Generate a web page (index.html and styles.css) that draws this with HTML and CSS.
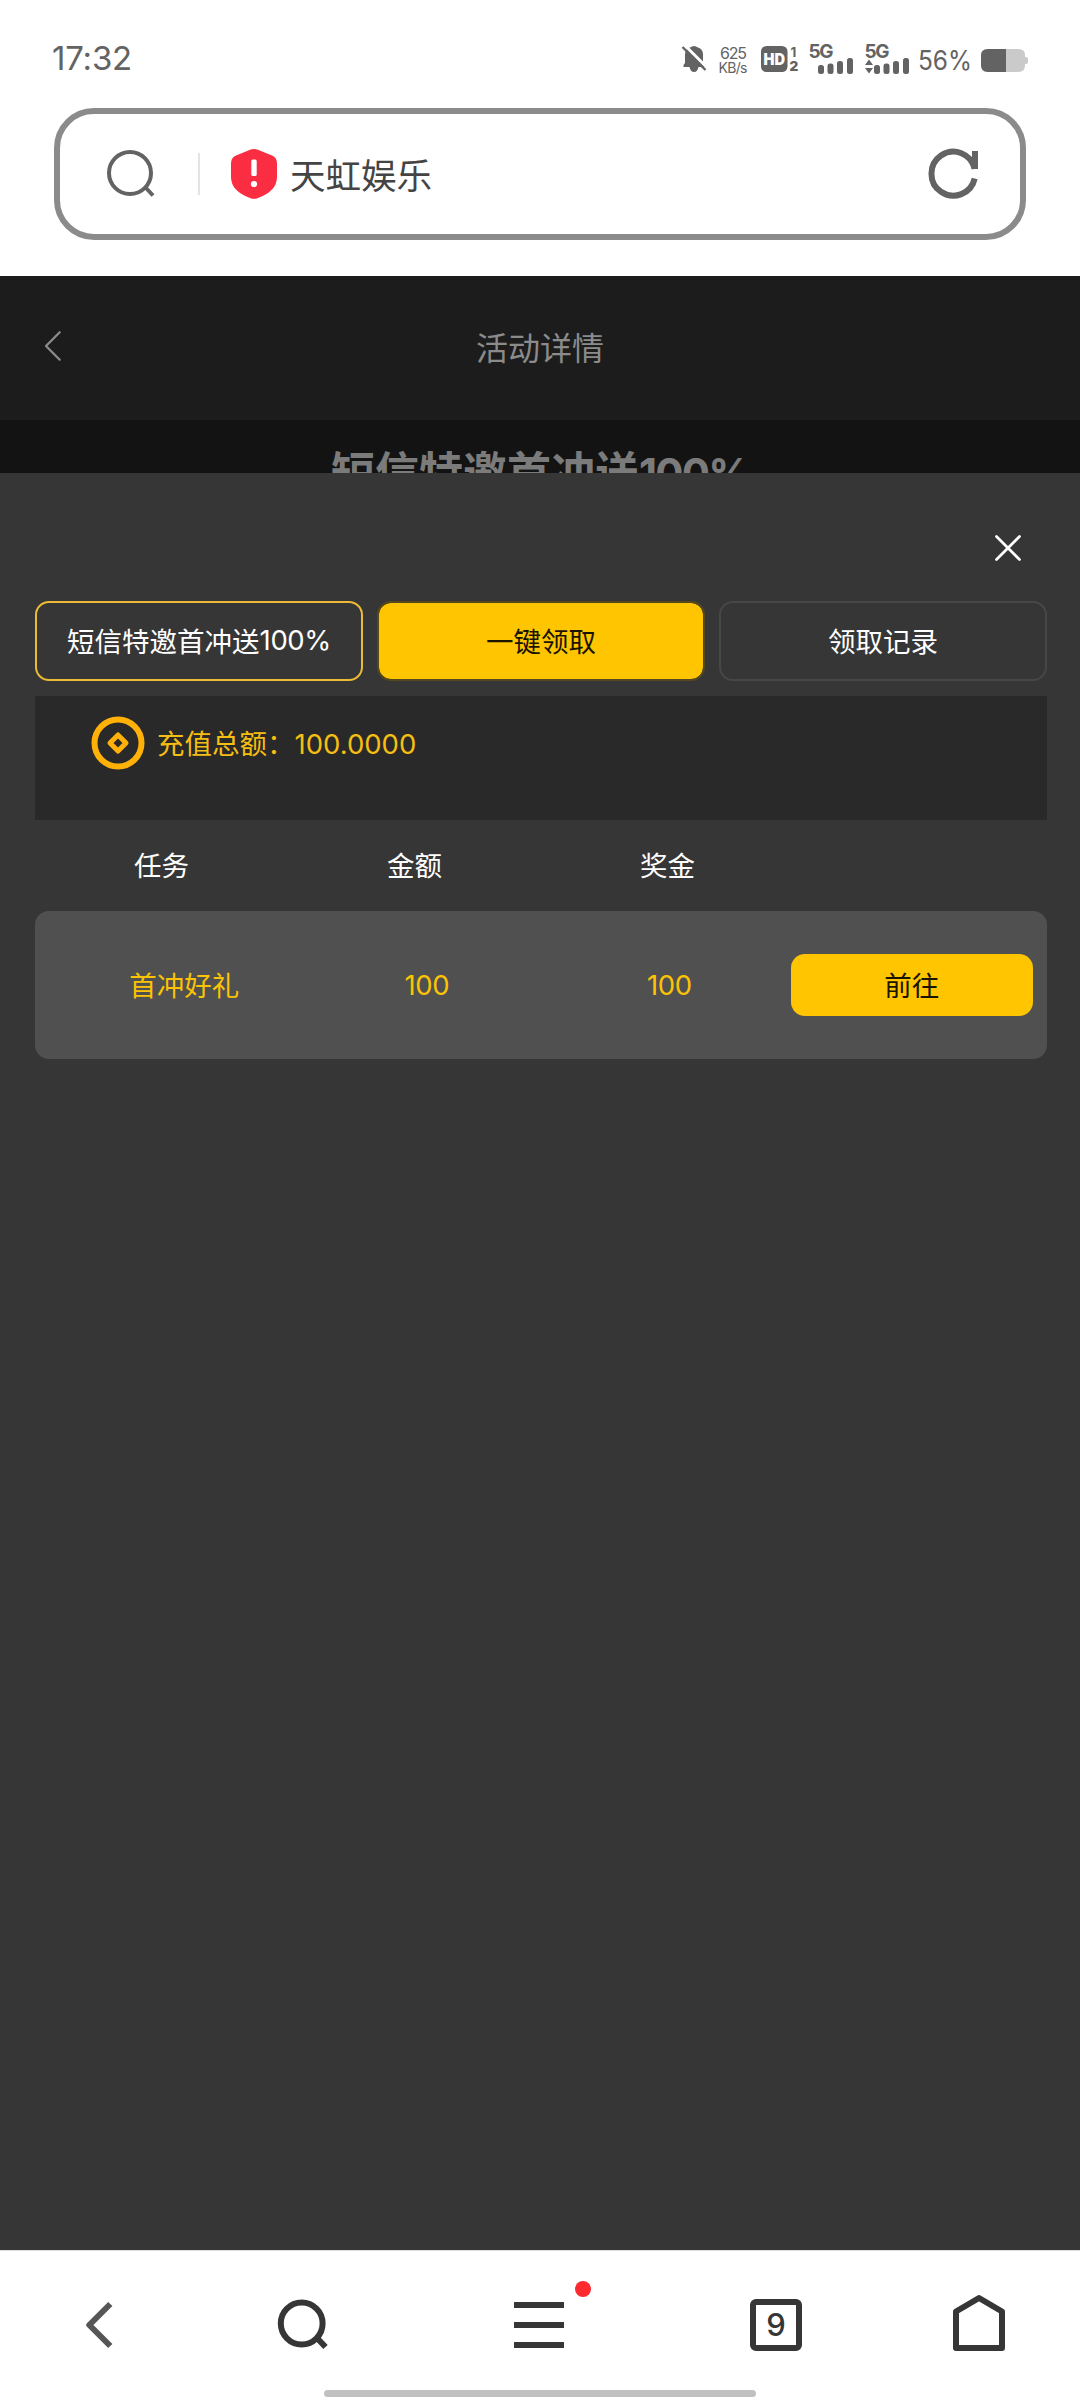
FILE: index.html
```html
<!DOCTYPE html>
<html lang="zh-CN">
<head>
<meta charset="utf-8">
<title>天虹娱乐</title>
<link rel="stylesheet" href="styles.css">
</head>
<body>
<div class="screen">
  <header class="browser">
    <div class="status">
      <span class="clock">17:32</span>
      <svg class="status-icons" width="350" height="36" viewBox="680 40 350 36">
        <g fill="#636363">
          <path d="M683.500 67V65L685 63V54.500Q685 49 690 47.500Q694 44.500 698 47.500Q703 49 703 54.500V63L705 65V67Z"/>
          <path d="M689.500 67h9q-1 5-4.500 5t-4.500-5Z"/>
          <path d="M684 44.500L707.500 68" stroke="#fff" stroke-width="3"/>
          <path d="M682.500 47L705.500 70" stroke="#636363" stroke-width="2.400"/>
          <rect x="761" y="46" width="26.500" height="26" rx="5.500"/>
          <rect x="818" y="65" width="6" height="9" rx="2.500"/>
          <rect x="827.500" y="63.500" width="6" height="10.500" rx="2.500"/>
          <rect x="837" y="61" width="6" height="13" rx="2.500"/>
          <rect x="847" y="58" width="6" height="16" rx="2.500"/>
          <rect x="874" y="65" width="6" height="9" rx="2.500"/>
          <rect x="883.500" y="63.500" width="6" height="10.500" rx="2.500"/>
          <rect x="893" y="61" width="6" height="13" rx="2.500"/>
          <rect x="903" y="58" width="6" height="16" rx="2.500"/>
          <path d="M865 65l4-5.500 4 5.500ZM865 68h8l-4 5.500Z"/>
          <path d="M1006 49h12.500q6.500 0 6.500 6.500v1.500h1q2 0 2 2v3q0 2-2 2h-1v1.500q0 6.500-6.500 6.500H1006Z" fill="#cacaca"/>
          <path d="M1006 49h-18.500q-6.500 0-6.500 6.500v10q0 6.500 6.500 6.500H1006Z"/>
        </g>
        <g class="status-text">
          <text x="720" y="59" font-size="16" textLength="27">625</text>
          <text x="718.500" y="73" font-size="14" textLength="29">KB/s</text>
          <text x="763.500" y="65" font-size="15.500" class="heavy inverse" textLength="21.500" lengthAdjust="spacingAndGlyphs">HD</text>
          <text x="790.500" y="56.500" font-size="13.500" class="semi">1</text>
          <text x="789.500" y="71" font-size="13.500" class="heavy">2</text>
          <text x="808.500" y="58" font-size="19" class="semi" textLength="25">5G</text>
          <text x="864.500" y="58" font-size="19" class="semi" textLength="25">5G</text>
          <text x="918" y="70" font-size="26.500" class="light" textLength="54" lengthAdjust="spacingAndGlyphs">56%</text>
        </g>
      </svg>
    </div>
    <div class="address">
      <svg class="address-search" width="50" height="50" viewBox="106 148 50 50" fill="none" stroke="#636363" stroke-width="4">
        <circle cx="130" cy="172" r="21"/>
        <path d="M146 187L153 194.500"/>
      </svg>
      <span class="address-rule"></span>
      <svg class="shield" width="46" height="50" viewBox="0 0 46 50">
        <path d="M18.500 1Q23-1 27.500 1L41 6.500Q46 8.500 46 14V28Q46 42 27 49Q23 50.700 19 49Q0 42 0 28V14Q0 8.500 5 6.500Z" fill="#fa2d42"/>
        <rect x="20.300" y="10.500" width="5.400" height="16.500" rx="1.500" fill="#fff"/>
        <circle cx="23" cy="35" r="3.100" fill="#fff"/>
      </svg>
      <span class="site">天虹娱乐</span>
      <svg class="reload" width="52" height="52" viewBox="928 148 52 52" fill="none" stroke="#636363" stroke-width="6">
        <path d="M974.700 168.800A21.900 22 0 1 0 974.700 178.500"/>
        <path d="M972 151h6v18h-6l-4-9 4-3Z" fill="#636363" stroke="none"/>
      </svg>
    </div>
  </header>
  <nav class="page-nav">
    <svg width="20" height="34" viewBox="43.500 329 20 34" fill="none" stroke="#8b8b8b" stroke-width="2.300" stroke-linecap="round" stroke-linejoin="round">
      <path d="M60.200 332.200L46.500 346L60.200 359.800"/>
    </svg>
    <span>活动详情</span>
  </nav>
  <div class="page-title"><h1>短信特邀首冲送<b>100%</b></h1></div>
  <main class="sheet">
    <svg class="close" width="30" height="30" viewBox="993.500 533.500 30 30" stroke="#fff" stroke-width="2.700" stroke-linecap="round">
      <path d="M997 537L1020 560M1020 537L997 560"/>
    </svg>
    <div class="tabs">
      <div class="tab tab-outline">短信特邀首冲送<span class="num">100%</span></div>
      <div class="tab tab-fill">一键领取</div>
      <div class="tab">领取记录</div>
    </div>
    <div class="total">
      <svg width="54" height="54" viewBox="-27 -27 54 54" fill="none" stroke="#ffb108">
        <circle r="23.500" stroke-width="6"/>
        <path d="M0-8L8 0L0 8L-8 0Z" stroke-width="5" stroke-linejoin="round"/>
      </svg>
      <span>充值总额：<span class="num total-num">100.0000</span></span>
    </div>
    <div class="row head">
      <span>任务</span><span>金额</span><span>奖金</span><span></span>
    </div>
    <div class="row task">
      <span>首冲好礼</span><span class="num">100</span><span class="num">100</span><span class="go">前往</span>
    </div>
  </main>
  <footer class="toolbar">
    <div class="tools">
      <svg class="t-back" width="32" height="52" viewBox="83 2299 32 52" fill="none" stroke="#565656" stroke-width="6" stroke-linejoin="round" stroke-linecap="butt">
        <path d="M110.300 2304L89.300 2325L110.300 2346"/>
      </svg>
      <svg class="t-search" width="52" height="52" viewBox="276 2299 52 52" fill="none" stroke="#363636" stroke-width="6">
        <circle cx="301.700" cy="2323.500" r="20.900"/>
        <path d="M317 2338L325.500 2347"/>
      </svg>
      <div class="t-menu">
        <svg width="50" height="46" viewBox="0 0 50 46" fill="#363636"><path d="M0 0h50v6H0ZM0 20h50v6H0ZM0 40h50v6H0Z"/></svg>
        <i class="dot"></i>
      </div>
      <div class="t-tabs">9</div>
      <svg class="t-home" width="52" height="58" viewBox="953 2294 52 58" fill="none" stroke="#363636" stroke-width="6" stroke-linejoin="round">
        <path d="M956 2311.500L979 2298L1002 2311.500V2348H956Z"/>
      </svg>
    </div>
    <div class="home-bar"></div>
  </footer>
</div>
</body>
</html>
```
FILE: styles.css
```css
* { box-sizing: border-box; }
body { margin: 0; background: #fff; }
.screen {
  width: 1080px; height: 2400px; overflow: hidden;
  display: flex; flex-direction: column;
  font-family: "Noto Sans CJK SC", sans-serif;
  font-size: 27.5px; color: #fff;
}
.browser { height: 276px; background: #fff; color: #636363; }
.status { height: 108px; padding: 40px 50px 0 52px; display: flex; justify-content: space-between; align-items: flex-start; }
.clock { font: 400 33px/36px Inter, sans-serif; letter-spacing: -.2px; }
.status-icons { display: block; }
.status-text { font-family: Inter, sans-serif; fill: #636363; }
.status-text .semi { font-weight: 700; }
.status-text .heavy { font-weight: 900; }
.status-text .light { font-weight: 400; }
.status-text .inverse { fill: #fff; }
.address {
  width: 972px; height: 132px; margin: 0 54px; padding: 0 40px 0 46px;
  border: 6px solid #8b8b8b; border-radius: 40px;
  display: flex; align-items: center;
}
.address-rule { width: 2px; height: 42px; margin-left: 42px; background: #e4e4e4; }
.shield { margin-left: 31px; }
.site { margin-left: 13px; font-size: 35.5px; line-height: 50px; color: #444; }
.reload { margin-left: auto; }
.page-nav {
  height: 144px; background: #1c1c1c; color: #8b8b8b;
  display: grid; grid-template-columns: 20px 1fr 20px; align-items: center;
  padding: 0 43px 4px; font-size: 32px; text-align: center;
}
.page-title { height: 53px; overflow: hidden; background: #131313; color: #7b7b7b; }
.page-title h1 { margin: 18px 0 0; font-size: 44px; line-height: 64px; font-weight: 700; text-align: center; }
.page-title b { font-family: Inter, sans-serif; font-weight: 700; font-size: 42px; letter-spacing: -1.8px; }
.sheet { flex: 1; background: #363636; padding: 60px 33px 0 35px; display: flex; flex-direction: column; }
.close { align-self: flex-end; margin-right: 24px; }
.tabs { display: grid; grid-template-columns: repeat(3, 1fr); gap: 14px; height: 80px; margin-top: 38px; }
.tab { display: flex; align-items: center; justify-content: center; padding-bottom: 2px; border: 2px solid #474747; border-radius: 14px; }
.tab-outline { border-color: #ebbb35; }
.tab-fill { background: #ffc500; background-clip: padding-box; border-color: #54481c; color: #1a1400; }
.num { font-family: Inter, "Noto Sans CJK SC", sans-serif; letter-spacing: -.4px; }
.total { height: 124px; margin-top: 15px; padding: 20px 56px; background: #292929; color: #f5be12; display: flex; align-items: flex-start; gap: 12px; line-height: 52px; }
.total-num { letter-spacing: 0; }
.row { display: grid; grid-template-columns: repeat(4, 1fr); align-items: center; text-align: center; }
.head { height: 91px; padding-bottom: 4px; }
.task { height: 148px; padding: 0 14px 0 28px; background: #505050; border-radius: 14px; color: #fac305; }
.task span:first-child { padding-bottom: 2px; }
.go { height: 62px; line-height: 60px; border-radius: 14px; background: #ffc500; color: #1a1400; }
.toolbar { height: 150px; border-top: 1px solid #ddd; background: #fff; color: #363636; }
.tools { height: 139px; padding: 43px 75px 0 83px; display: flex; align-items: flex-start; }
.tools > * { flex: none; }
.t-back { margin-top: 5px; }
.t-search { margin: 5px 0 0 161px; }
.t-menu { position: relative; width: 50px; height: 46px; margin: 8px 0 0 186px; }
.t-menu svg { display: block; }
.dot { position: absolute; left: 61px; top: -21px; width: 16px; height: 16px; border-radius: 50%; background: #ff2a2e; }
.t-tabs { width: 52px; height: 52px; margin: 5px 0 0 186px; border: 6px solid #363636; border-radius: 6px; font: 500 31px/40px Inter, sans-serif; text-align: center; }
.t-home { margin-left: auto; }
.home-bar { width: 432px; height: 7px; margin: 0 auto; border-radius: 4px; background: #c1c1c1; }
```
